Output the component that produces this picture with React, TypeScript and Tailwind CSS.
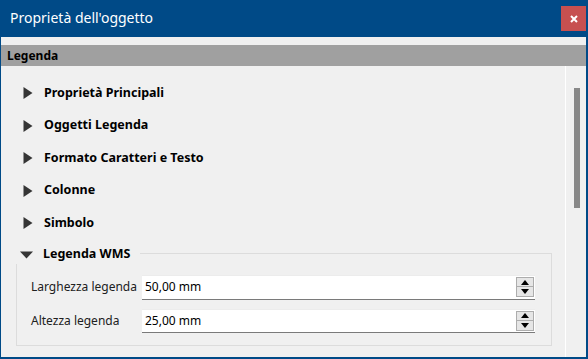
import React from "react";

const RightTri = () => (
  <svg width="10" height="12" viewBox="0 0 10 12" className="shrink-0">
    <path d="M0.5 0 L9.5 6 L0.5 12 Z" fill="#353535" />
  </svg>
);

const DownTri = () => (
  <svg width="13" height="8" viewBox="0 0 13 8" className="shrink-0">
    <path d="M0 0.5 L13 0.5 L6.5 7.5 Z" fill="#353535" />
  </svg>
);

const Spin = () => (
  <div className="flex flex-col w-[18px] h-[20px] mr-[1px]">
    <div className="h-[10px] border border-[#adadad] bg-[#e6e6e6] flex items-center justify-center">
      <svg width="8" height="5" viewBox="0 0 8 5"><path d="M0 5 L8 5 L4 0 Z" fill="#000" /></svg>
    </div>
    <div className="h-[10px] border border-t-0 border-[#adadad] bg-[#e6e6e6] flex items-center justify-center">
      <svg width="8" height="5" viewBox="0 0 8 5"><path d="M0 0 L8 0 L4 5 Z" fill="#000" /></svg>
    </div>
  </div>
);

const Field = ({ label, value, h }: { label: string; value: string; h: string }) => (
  <div className="flex items-center">
    <div className="w-[125px] pl-[14px] text-[12px] text-[#202020] whitespace-nowrap">{label}</div>
    <div className={`w-[393px] ${h} bg-white border-t border-t-[#ececec] border-b border-b-[#7a7a7a] flex items-center justify-between pl-[3px]`}>
      <span className="text-[12px] text-black">{value}</span>
      <Spin />
    </div>
  </div>
);

export default function App() {
  const items = [
    "Proprietà Principali",
    "Oggetti Legenda",
    "Formato Caratteri e Testo",
    "Colonne",
    "Simbolo",
  ];
  return (
    <div
      className="w-[588px] h-[359px] bg-[#004a87] flex flex-col overflow-hidden"
      style={{ fontFamily: '"Noto Sans", "Open Sans", sans-serif' }}
    >
      <div className="h-[37px] shrink-0 flex items-center justify-between pl-[10px] pr-[2px]">
        <span className="text-[14px] text-white leading-none mt-[-1px]">Proprietà dell'oggetto</span>
        <div className="w-[25px] h-[25px] bg-[#c75050] flex items-center justify-center">
          <svg width="8" height="8" viewBox="0 0 8 8">
            <path d="M1 1 L7 7 M7 1 L1 7" stroke="#fff" strokeWidth="2" />
          </svg>
        </div>
      </div>
      <div className="flex-1 ml-px mr-[2px] mb-[2px] bg-[#f0f0f0] flex flex-col min-h-0">
        <div className="h-[8px] shrink-0" />
        <div className="h-[21px] shrink-0 bg-[#a0a0a0] flex items-center pl-[6px]">
          <span className="text-[12px] font-bold text-black">Legenda</span>
        </div>
        <div className="flex-1 flex min-h-0">
          <div className="flex-1 flex flex-col pt-[11px]">
            {items.map((t) => (
              <div key={t} className="h-[32.5px] flex items-center pl-[22px] gap-[11px]">
                <RightTri />
                <span className="text-[12.5px] font-bold text-black">{t}</span>
              </div>
            ))}
            <div className="ml-[15px] mt-[6px] w-[536px] flex flex-col">
              <div className="h-[18px] flex">
                <div className="w-[124px] flex items-center pl-[4px] gap-[10px]">
                  <DownTri />
                  <span className="text-[12.5px] font-bold text-black">Legenda WMS</span>
                </div>
                <div className="flex-1 self-end h-[11px] border-t border-r border-[#dcdcdc]" />
              </div>
              <div className="h-[82px] border-l border-r border-b border-[#dcdcdc] flex flex-col pt-[11px] gap-[9px]">
                <Field label="Larghezza legenda" value="50,00 mm" h="h-[25px]" />
                <Field label="Altezza legenda" value="25,00 mm" h="h-[24px]" />
              </div>
            </div>
          </div>
          <div className="w-px bg-white" />
          <div className="w-[20px] flex justify-center pt-[22px]">
            <div className="w-[6px] h-[120px] bg-[#888888] ml-[1px]" />
          </div>
        </div>
      </div>
    </div>
  );
}
